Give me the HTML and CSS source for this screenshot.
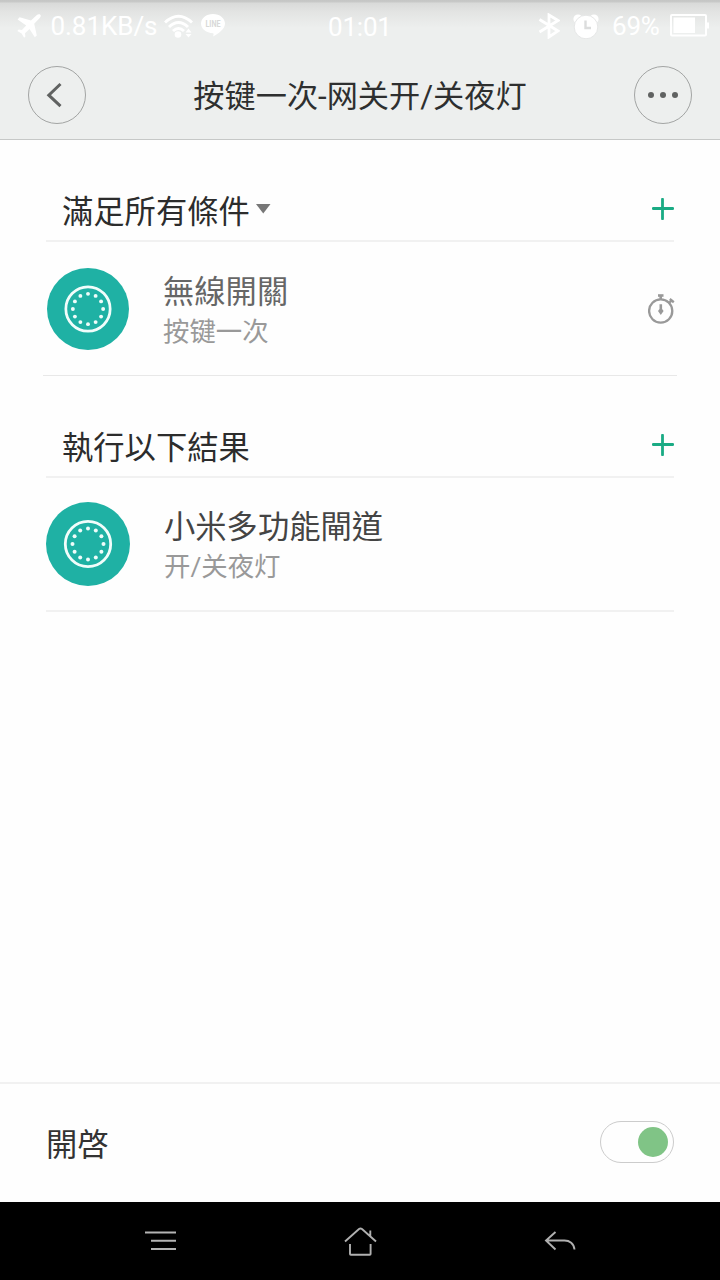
FILE: index.html
```html
<!DOCTYPE html>
<html lang="zh-Hant">
<head>
<meta charset="utf-8">
<title>按键一次-网关开/关夜灯</title>
<link rel="stylesheet" href="styles.css">
</head>
<body>
<svg class="defs" width="0" height="0">
  <symbol id="device" viewBox="0 0 84 84">
    <circle cx="42" cy="42" r="42" fill="#1fb1a4"/>
    <circle cx="42" cy="42" r="22.7" fill="none" stroke="#f1fdfb" stroke-width="2.8"/>
    <g fill="#effcfa">
      <circle cx="42" cy="26.5" r="2"/><circle cx="49.8" cy="28.6" r="2"/><circle cx="55.4" cy="34.2" r="2"/>
      <circle cx="57.5" cy="42" r="2"/><circle cx="55.4" cy="49.8" r="2"/><circle cx="49.8" cy="55.4" r="2"/>
      <circle cx="42" cy="57.5" r="2"/><circle cx="34.2" cy="55.4" r="2"/><circle cx="28.6" cy="49.8" r="2"/>
      <circle cx="26.5" cy="42" r="2"/><circle cx="28.6" cy="34.2" r="2"/><circle cx="34.2" cy="28.6" r="2"/>
    </g>
  </symbol>
  <symbol id="plus" viewBox="0 0 22 22">
    <path d="M10.500 1.200v19.600M1.200 10.500h19.600" fill="none" stroke="#1aab84" stroke-width="2.800" stroke-linecap="round"/>
  </symbol>
</svg>
<header class="header">
  <div class="status">
    <div class="status-left">
      <svg class="plane" width="24" height="24" viewBox="0 0 24 24"><path fill="#fff" d="M23.300.7c1 1 .2 2.600-.8 3.600l-5.300 5.500 2.600 11.700-2 1.800-5.300-8.300-4.500 4.200.4 3.300-1.300 1.300-2.500-4.300L.3 17l1.400-1.400 3.200.4 4.300-4.500L.6 5.500l2-2.300L14 6.500l5.600-5.200c1-1 2.700-1.600 3.700-.6z"/></svg>
      <span class="speed">0.81KB/s</span>
      <svg class="wifi" width="29" height="24" viewBox="0 0 29 24"><g fill="none" stroke="#fff" stroke-width="3"><path d="M1 8.500Q14.500-4 28 8.500"/><path d="M5 13Q14.500 4 24 13"/><path d="M9 17q5.500-5 11 0"/></g><circle cx="14" cy="20.500" r="3.300" fill="#fff"/><path fill="#fff" d="M21.500 18.500l3-4 3 4zM21.500 20l3 3.500 3-3.500z"/></svg>
      <svg class="line" width="24" height="23" viewBox="0 0 24 23"><path fill="#fff" d="M12 0c6.600 0 12 4.200 12 9.600 0 5-5.500 9.500-12 13 .8-2 .7-3.200 0-3.400C5.400 19.200 0 15 0 9.600S5.400 0 12 0z"/><text class="line-text" x="12" y="13.200" text-anchor="middle" textLength="15" lengthAdjust="spacingAndGlyphs">LINE</text></svg>
    </div>
    <div class="clock">01:01</div>
    <div class="status-right">
      <svg class="bluetooth" width="22" height="26" viewBox="0 0 22 26"><path fill="none" stroke="#fff" stroke-width="2.800" d="M1.500 6.500L20 18l-9 6V2l9 5.500L1.500 19"/></svg>
      <svg class="alarm" width="26" height="25" viewBox="0 0 26 25"><g fill="#fff"><circle cx="5" cy="5" r="4.600"/><circle cx="21" cy="5" r="4.600"/></g><circle cx="13" cy="13" r="11.800" fill="#fff" stroke="#e6e7e7" stroke-width="1"/><path d="M12.500 6.500v7.500h5.500" fill="none" stroke="#dcdddd" stroke-width="2.400"/></svg>
      <span class="percent">69%</span>
      <svg class="battery" width="39" height="23" viewBox="0 0 39 23"><rect x="1" y="1" width="35" height="20.500" rx="1" fill="none" stroke="#fff" stroke-width="2"/><path fill="#fff" d="M3.500 3.500H25v15.500H3.500zM37 8.500h2v6h-2z"/></svg>
    </div>
  </div>
  <div class="titlebar">
    <button class="round" aria-label="返回"><svg width="58" height="58" viewBox="0 0 58 58"><circle cx="29" cy="29" r="28.500" fill="none" stroke="#a2a4a3"/><path d="M32.500 18L20.800 29.200l11.700 11" fill="none" stroke="#606261" stroke-width="3"/></svg></button>
    <h1 class="title" lang="zh-Hans">按键一次-网关开/关夜灯</h1>
    <button class="round" aria-label="更多"><svg width="58" height="58" viewBox="0 0 58 58"><circle cx="29" cy="29" r="28.500" fill="none" stroke="#a2a4a3"/><g fill="#606261"><circle cx="17" cy="29" r="3"/><circle cx="29" cy="29" r="3"/><circle cx="41" cy="29" r="3"/></g></svg></button>
  </div>
</header>
<main class="content">
  <section class="group">
    <div class="group-head">
      <h2 class="heading">滿足所有條件</h2>
      <svg class="caret" width="15" height="10" viewBox="0 0 15 10"><path d="M0 0h14.500L7.250 9.500z" fill="#777"/></svg>
      <svg class="add" width="22" height="22"><use href="#plus"/></svg>
    </div>
    <div class="item item-condition">
      <svg class="device" width="82" height="82"><use href="#device"/></svg>
      <div class="labels">
        <div class="name">無線開關</div>
        <div class="detail" lang="zh-Hans">按键一次</div>
      </div>
      <svg class="timer" width="27" height="30" viewBox="0 0 27 30"><g fill="none" stroke="#999"><circle cx="12.700" cy="17" r="11.600" stroke-width="2.300"/><path d="M10 1.500h5.500" stroke-width="2.600"/><path d="M12.700 2v4" stroke-width="2.600"/><path d="M20.500 9.500l3.500-3.500M21.800 5l4 3.200" stroke-width="2.400"/></g><path d="M11.500 10.200h2.600v4.700l1.500 2-2.800 4-2.800-4 1.500-2z" fill="#999"/></svg>
    </div>
  </section>
  <section class="group">
    <div class="group-head">
      <h2 class="heading">執行以下結果</h2>
      <svg class="add" width="22" height="22"><use href="#plus"/></svg>
    </div>
    <div class="item item-result">
      <svg class="device" width="84" height="84"><use href="#device"/></svg>
      <div class="labels">
        <div class="name">小米多功能閘道</div>
        <div class="detail" lang="zh-Hans">开/关夜灯</div>
      </div>
    </div>
  </section>
</main>
<footer class="enable">
  <span class="enable-label">開啓</span>
  <span class="switch" role="switch" aria-checked="true"><span class="knob"></span></span>
</footer>
<nav class="navbar">
  <svg class="menu" width="32" height="20" viewBox="0 0 32 20"><path d="M0 1.500H31M6 9.700h25M6 18h25" fill="none" stroke="#b4b4b4" stroke-width="2"/></svg>
  <svg class="home" width="34" height="30" viewBox="0 0 34 30"><path d="M1 15.500L15 3q1.500-1 3 0l14 12.500M26.300 4.500v6M6 18v10q0 .8.800.8h19q.8 0 .8-.8V18" fill="none" stroke="#b0b0b0" stroke-width="1.900"/></svg>
  <svg class="back" width="32" height="20" viewBox="0 0 32 20"><path d="M11.500 1L2 9.500 11.500 18.500M2 9.500h18.500c5 0 9.500 3 10 9" fill="none" stroke="#b0b0b0" stroke-width="1.900"/></svg>
</nav>
</body>
</html>
```
FILE: styles.css
```css
* { box-sizing: border-box; }
body {
  margin: 0;
  width: 720px;
  height: 1280px;
  overflow: hidden;
  display: flex;
  flex-direction: column;
  background: #fefefe;
  font-family: Roboto, "Noto Sans CJK TC", sans-serif;
}
:lang(zh-Hans) { font-family: Roboto, "Noto Sans CJK SC", sans-serif; }
svg { display: block; flex: none; }
.defs { position: absolute; }
h1, h2 { margin: 0; font-weight: 400; }

.header {
  flex: none;
  height: 140px;
  border-bottom: 1px solid #c6c8c7;
  background: linear-gradient(#c5c6c5 0, #c8c9c8 2px, #d9dad9 3px, #e3e4e3 12px, #edefee 28px);
}
.status {
  display: grid;
  grid-template-columns: 328px 64px 1fr;
  height: 50px;
  color: #fff;
  font-size: 26px;
  line-height: 50px;
  white-space: nowrap;
}
.status-left, .status-right { display: flex; align-items: center; }
.status-left { padding-left: 17px; }
.speed { width: 107px; margin-left: 9.500px; letter-spacing: -.05px; }
.wifi { margin-left: 6.500px; }
.line { margin-left: 8px; margin-bottom: 2px; }
.line-text { fill: #d8d9d8; font: 700 9.500px Roboto, sans-serif; }
.clock { padding-top: 2px; letter-spacing: -.2px; }
.status-right { padding-left: 146px; }
.alarm { margin-left: 13px; }
.percent { width: 48px; margin-left: 13px; letter-spacing: -.2px; }
.battery { margin-left: 10px; margin-bottom: 1px; }

.titlebar {
  display: flex;
  align-items: center;
  justify-content: space-between;
  padding: 16px 28px 0;
}
.round { width: 58px; height: 58px; padding: 0; border: 0; background: none; }
.title { font-size: 31.200px; line-height: 54px; padding-top: 4px; color: #2e2f2f; }

.content { flex: 1; padding: 0 46px; }
.group-head {
  display: flex;
  align-items: center;
  height: 102px;
  padding: 38px 0 0 16px;
  border-bottom: 2px solid #f1f1f1;
}
.heading { font-size: 31.300px; line-height: 48px; color: #2c2c2c; padding-top: 8px; }
.caret { margin-left: 6px; }
.add { margin-left: auto; }
.item { display: flex; align-items: center; }
.item-condition {
  height: 134px;
  margin: 0 -3px;
  padding: 0 2px 0 4px;
  border-bottom: 1px solid #e8e8e8;
}
.item-result { height: 134px; border-bottom: 2px solid #f1f1f1; }
.labels { margin-left: 34px; padding-top: 4px; }
.name { font-size: 31.300px; line-height: 42px; color: #444; }
.item-condition .name { color: #666; }
.detail { font-size: 26.400px; line-height: 36px; color: #999; }
.timer { margin-left: auto; }

.enable {
  flex: none;
  height: 120px;
  border-top: 2px solid #f1f1f1;
  padding: 0 46px 2px;
  display: flex;
  align-items: center;
  justify-content: space-between;
}
.enable-label { font-size: 31.300px; color: #333; }
.switch {
  display: flex;
  align-items: center;
  justify-content: flex-end;
  width: 74px;
  height: 42px;
  padding-right: 5px;
  border: 1px solid #ccc;
  border-radius: 21px;
}
.knob { width: 30px; height: 30px; border-radius: 50%; background: #80c486; }

.navbar {
  flex: none;
  height: 78px;
  background: #000;
  display: flex;
  align-items: center;
  justify-content: space-between;
  padding: 0 144px 0 145px;
}
```
